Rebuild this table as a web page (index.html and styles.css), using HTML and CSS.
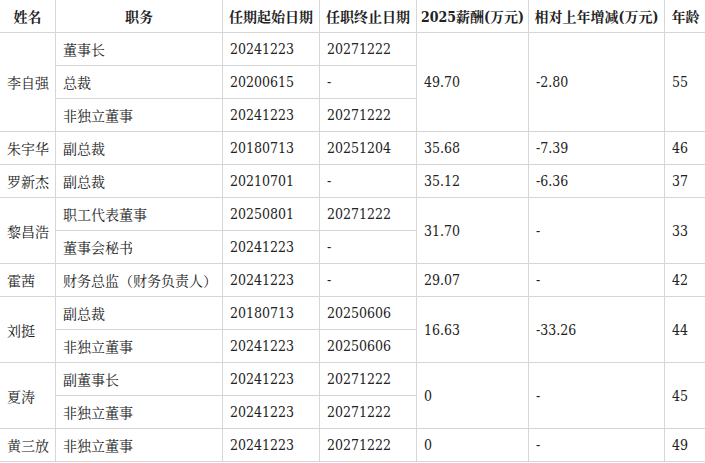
FILE: index.html
```html
<!DOCTYPE html>
<html lang="zh-CN">
<head>
<meta charset="utf-8">
<link rel="stylesheet" href="styles.css">
</head>
<body>
<table class="pay">
  <colgroup>
    <col class="c-name"><col class="c-role"><col class="c-date"><col class="c-date"><col class="c-pay"><col class="c-diff"><col class="c-age">
  </colgroup>
  <thead>
    <tr><th>姓名</th><th>职务</th><th>任期起始日期</th><th>任职终止日期</th><th>2025薪酬(万元)</th><th>相对上年增减(万元)</th><th>年龄</th></tr>
  </thead>
  <tbody>
    <tr><td rowspan="3">李自强</td><td>董事长</td><td>20241223</td><td>20271222</td><td rowspan="3">49.70</td><td rowspan="3">-2.80</td><td rowspan="3">55</td></tr>
    <tr><td>总裁</td><td>20200615</td><td>-</td></tr>
    <tr><td>非独立董事</td><td>20241223</td><td>20271222</td></tr>
    <tr><td>朱宇华</td><td>副总裁</td><td>20180713</td><td>20251204</td><td>35.68</td><td>-7.39</td><td>46</td></tr>
    <tr><td>罗新杰</td><td>副总裁</td><td>20210701</td><td>-</td><td>35.12</td><td>-6.36</td><td>37</td></tr>
    <tr><td rowspan="2">黎昌浩</td><td>职工代表董事</td><td>20250801</td><td>20271222</td><td rowspan="2">31.70</td><td rowspan="2">-</td><td rowspan="2">33</td></tr>
    <tr><td>董事会秘书</td><td>20241223</td><td>-</td></tr>
    <tr><td>霍茜</td><td>财务总监（财务负责人）</td><td>20241223</td><td>-</td><td>29.07</td><td>-</td><td>42</td></tr>
    <tr><td rowspan="2">刘挺</td><td>副总裁</td><td>20180713</td><td>20250606</td><td rowspan="2">16.63</td><td rowspan="2">-33.26</td><td rowspan="2">44</td></tr>
    <tr><td>非独立董事</td><td>20241223</td><td>20250606</td></tr>
    <tr><td rowspan="2">夏涛</td><td>副董事长</td><td>20241223</td><td>20271222</td><td rowspan="2">0</td><td rowspan="2">-</td><td rowspan="2">45</td></tr>
    <tr><td>非独立董事</td><td>20241223</td><td>20271222</td></tr>
    <tr><td>黄三放</td><td>非独立董事</td><td>20241223</td><td>20271222</td><td>0</td><td>-</td><td>49</td></tr>
  </tbody>
</table>
</body>
</html>
```

FILE: styles.css
```css
html, body {
  margin: 0;
  padding: 0;
  background: #ffffff;
}

.pay {
  border-collapse: collapse;
  table-layout: fixed;
  width: 707px;
  margin: -1px 0 0 -1px;
  font-family: "DejaVu Serif", "Noto Serif CJK SC", "Noto Sans CJK SC", serif;
  font-stretch: condensed;
  font-size: 14px;
  color: #222222;
}

.c-name { width: 56px; }
.c-role { width: 167px; }
.c-date { width: 97px; }
.c-pay  { width: 112px; }
.c-diff { width: 136px; }
.c-age  { width: 42px; }

.pay th,
.pay td {
  border: 1px solid #d6d6d6;
  height: 32px;
  padding: 0 7px;
  vertical-align: middle;
  white-space: nowrap;
  overflow: hidden;
}

.pay th {
  font-weight: bold;
  text-align: center;
  padding: 0;
}

.pay td {
  text-align: left;
}
```
